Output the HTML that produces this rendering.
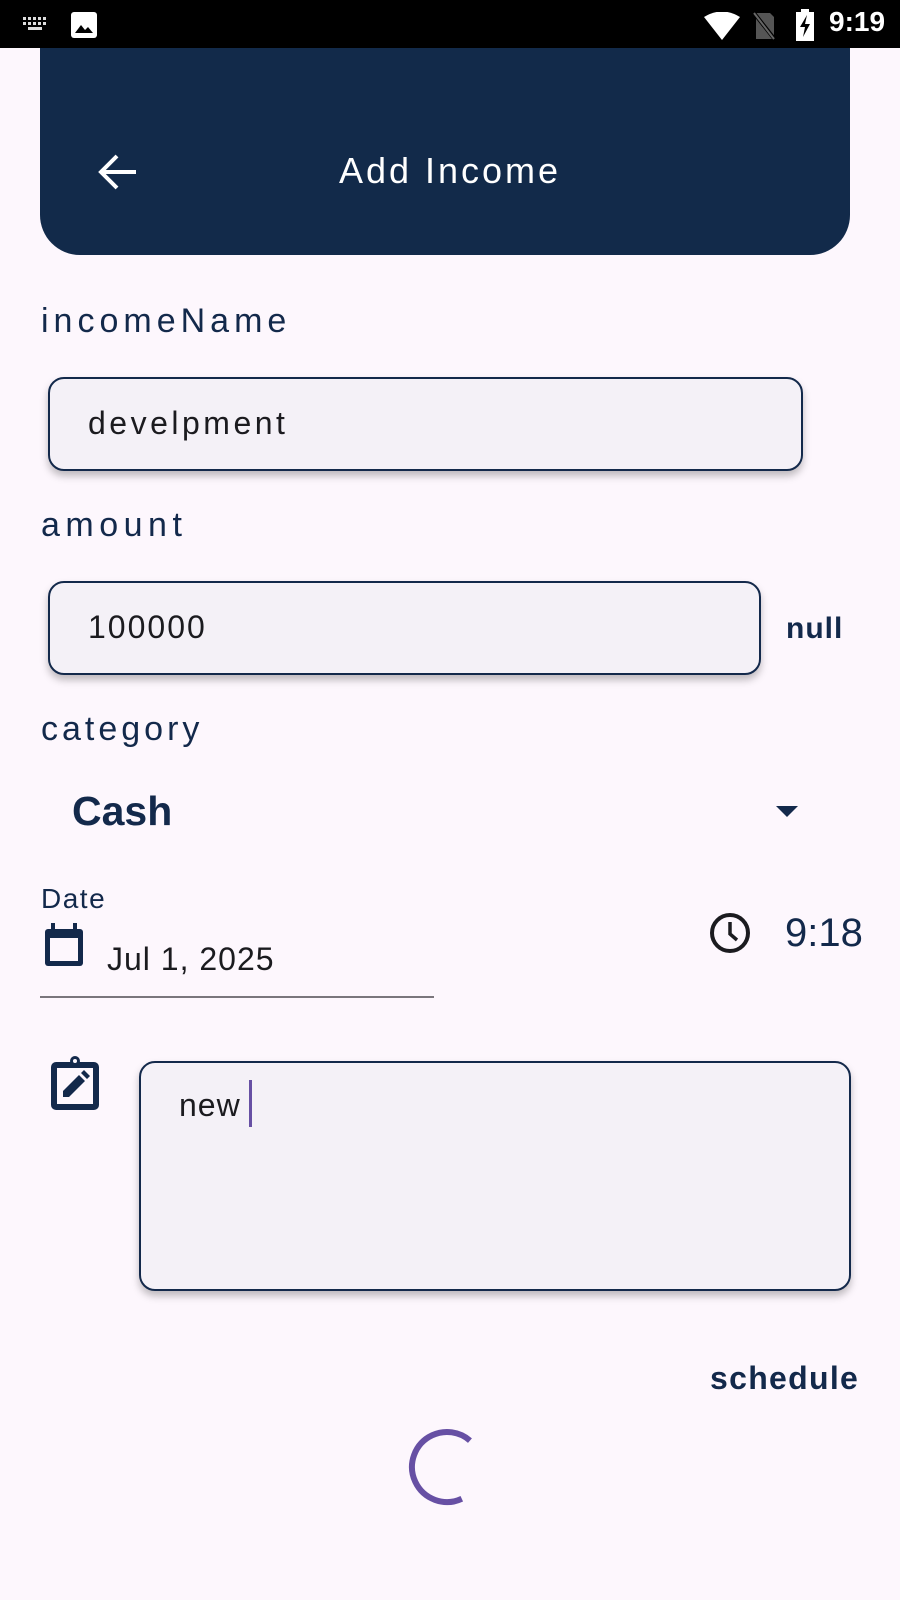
<!DOCTYPE html>
<html><head><style>
*{margin:0;padding:0;box-sizing:border-box}
body{width:900px;height:1600px;background:#fdf7fd;position:relative;overflow:hidden;font-family:"Liberation Sans",sans-serif;color:#13294b}
.a{position:absolute}
.inp{position:absolute;background:#f4f1f7;border:2px solid #13294b;border-radius:16px;box-shadow:0 5px 8px rgba(0,0,0,.25)}
.lbl{font-size:34px;letter-spacing:3.6px;color:#13294b}
</style></head><body>
<div class="a" style="left:0;top:0;width:900px;height:48px;background:#000"></div>
<svg class="a" style="left:20px;top:14px" width="30" height="20" viewBox="0 0 30 20"><g fill="#ddd"><rect x="3" y="3" width="3" height="3"/><rect x="8" y="3" width="3" height="3"/><rect x="13" y="3" width="3" height="3"/><rect x="18" y="3" width="3" height="3"/><rect x="23" y="3" width="3" height="3"/><rect x="3" y="8" width="3" height="3"/><rect x="8" y="8" width="3" height="3"/><rect x="13" y="8" width="3" height="3"/><rect x="18" y="8" width="3" height="3"/><rect x="23" y="8" width="3" height="3"/><rect x="8" y="13" width="14" height="3"/></g></svg>
<svg class="a" style="left:71px;top:12px" width="26" height="26" viewBox="0 0 26 26"><rect x="0" y="0" width="26" height="26" rx="3" fill="#fff"/><path d="M4 21 L10 13 L14 18 L17 15 L22 21Z" fill="#000"/></svg>
<svg class="a" style="left:704px;top:12px" width="36" height="28" viewBox="0 0 36 28"><path d="M0 5 Q18 -6 36 5 L18 28Z" fill="#fff"/></svg>
<svg class="a" style="left:752px;top:11px" width="26" height="30" viewBox="0 0 26 30"><path d="M4 2 H18 L22 6 V28 H4Z" fill="#555"/><path d="M2 2 L24 30" stroke="#000" stroke-width="4"/><path d="M2 2 L22 28" stroke="#666" stroke-width="2"/></svg>
<svg class="a" style="left:795px;top:9px" width="20" height="32" viewBox="0 0 20 32"><rect x="6" y="0" width="8" height="4" fill="#fff"/><rect x="1" y="3" width="18" height="29" fill="#fff"/><path d="M12 6 L5 18 H10 L8 28 L15 15 H10Z" fill="#000"/></svg>
<div class="a" style="left:829px;top:6px;font-size:28px;color:#fff;font-weight:bold">9:19</div>

<div class="a" style="left:40px;top:48px;width:810px;height:207px;background:#122a4a;border-radius:0 0 40px 40px"></div>
<svg class="a" style="left:96px;top:150px" width="44" height="44" viewBox="0 0 44 44"><path d="M40 22 H6 M21 6 L5 22 L21 38" stroke="#fff" stroke-width="4" fill="none"/></svg>
<div class="a" style="left:0;width:900px;top:150px;text-align:center;font-size:36px;color:#fff;letter-spacing:3px">Add Income</div>

<div class="a lbl" style="left:41px;top:302px;letter-spacing:5px">incomeName</div>
<div class="inp" style="left:48px;top:377px;width:755px;height:94px"></div>
<div class="a" style="left:88px;top:405px;font-size:32px;letter-spacing:3.5px;color:#1b1b1f">develpment</div>

<div class="a lbl" style="left:41px;top:506px;letter-spacing:5.5px">amount</div>
<div class="inp" style="left:48px;top:581px;width:713px;height:94px"></div>
<div class="a" style="left:88px;top:609px;font-size:32px;letter-spacing:2px;color:#1b1b1f">100000</div>
<div class="a" style="left:786px;top:612px;font-size:30px;font-weight:bold;letter-spacing:1px">null</div>

<div class="a lbl" style="left:41px;top:710px;letter-spacing:4px">category</div>
<div class="a" style="left:72px;top:788px;font-size:41px;font-weight:bold;letter-spacing:0">Cash</div>
<svg class="a" style="left:776px;top:806px" width="22" height="12" viewBox="0 0 22 12"><path d="M0 0 H22 L11 11Z" fill="#13294b"/></svg>

<div class="a" style="left:41px;top:883px;font-size:28px;letter-spacing:1.5px">Date</div>
<svg class="a" style="left:43px;top:923px" width="42" height="45" viewBox="0 0 42 45"><rect x="2" y="6" width="38" height="37" rx="3" fill="#13294b"/><rect x="7" y="15" width="28" height="23" fill="#fdf7fd"/><rect x="8" y="0" width="4" height="8" fill="#13294b"/><rect x="30" y="0" width="4" height="8" fill="#13294b"/></svg>
<div class="a" style="left:107px;top:941px;font-size:32px;letter-spacing:1px;color:#1b1b1f">Jul 1, 2025</div>
<div class="a" style="left:40px;top:996px;width:394px;height:2px;background:#7a767c"></div>
<svg class="a" style="left:709px;top:912px" width="42" height="42" viewBox="0 0 42 42"><circle cx="21" cy="21" r="18" stroke="#1b1b1f" stroke-width="4" fill="none"/><path d="M21 10 V22 L28 28" stroke="#1b1b1f" stroke-width="3.5" fill="none"/></svg>
<div class="a" style="left:785px;top:911px;font-size:40px;letter-spacing:0">9:18</div>

<svg class="a" style="left:48px;top:1056px" width="54" height="56" viewBox="0 0 54 56"><rect x="3" y="6" width="48" height="48" rx="5" fill="#13294b"/><rect x="9" y="12" width="36" height="36" fill="#fdf7fd"/><circle cx="27" cy="5" r="5" fill="#13294b"/><circle cx="27" cy="5" r="2" fill="#fdf7fd"/><path d="M15 41 L15 35 L31 19 L37 25 L21 41Z M33 17 L36 14 L42 20 L39 23Z" fill="#13294b"/></svg>
<div class="inp" style="left:139px;top:1061px;width:712px;height:230px"></div>
<div class="a" style="left:179px;top:1087px;font-size:32px;letter-spacing:1px;color:#1b1b1f">new</div>
<div class="a" style="left:249px;top:1080px;width:3px;height:47px;background:#6750a4"></div>

<div class="a" style="left:710px;top:1360px;font-size:32px;font-weight:bold;letter-spacing:1.3px">schedule</div>
<svg class="a" style="left:407px;top:1427px" width="80" height="80" viewBox="0 0 80 80"><circle cx="40" cy="40" r="35" fill="none" stroke="#6750a4" stroke-width="6" stroke-dasharray="150 300" transform="rotate(65 40 40)"/></svg>
</body></html>
